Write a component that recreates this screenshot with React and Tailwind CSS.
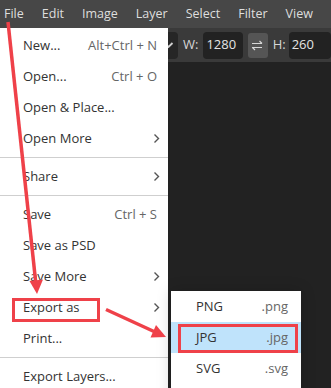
import React from "react";

const menuBar = ["File", "Edit", "Image", "Layer", "Select", "Filter", "View"];

const Chevron = () => (
    <svg width="7" height="11" viewBox="0 0 7 11" className="text-[#555]">
        <polyline points="1.5,1.5 5.5,5.5 1.5,9.5" fill="none" stroke="currentColor" strokeWidth="1.4" />
    </svg>
);

const Item = ({ label, right, sub }) => (
    <div className="h-[31px] flex items-center justify-between pl-[23px] pr-[11px]">
        <span>{label}</span>
        {right && <span className="text-[#666]">{right}</span>}
        {sub && <span className="-mr-[3px]"><Chevron /></span>}
    </div>
);

const Sep = () => (
    <div className="h-[7px] flex items-center">
        <div className="h-px w-full bg-[#cfcfcf]" />
    </div>
);

const App = () => {
    return (
        <div className="relative w-[331px] h-[388px] overflow-hidden flex flex-col bg-[#222] text-[13px]" style={{ fontFamily: '"Open Sans", "Liberation Sans", sans-serif' }}>
            {/* menubar */}
            <div className="h-[28px] bg-[#474747] flex items-center pl-[4px] gap-[18px] text-[12.5px] text-[#dedede]">
                {menuBar.map((m) => <span key={m}>{m}</span>)}
            </div>

            {/* toolbar */}
            <div className="h-[34px] bg-[#3a3a3a] flex items-center text-[#d6d6d6]">
                <div className="ml-[100px] w-[83px] h-[27px] rounded-[4px] bg-[#262626] flex items-center justify-end pr-[4px]">
                    <svg width="11" height="8" viewBox="0 0 11 8">
                        <polyline points="1.5,2 5.5,6 9.5,2" fill="none" stroke="#d0d0d0" strokeWidth="1.8" />
                    </svg>
                </div>
                <span className="ml-[5px]">W:</span>
                <div className="ml-[5px] w-[42px] h-[27px] rounded-[4px] bg-[#222] flex items-center pl-[3px] text-[#e4e4e4]">1280</div>
                <div className="ml-[5px] w-[21px] h-[25px] rounded-[3px] bg-[#555] flex items-center justify-center">
                    <svg width="13" height="11" viewBox="0 0 13 11">
                        <path d="M1 3.5h10M8.5 1l2.5 2.5M1 7.5h10M4 10L1.5 7.5" fill="none" stroke="#d8d8d8" strokeWidth="1.2" />
                    </svg>
                </div>
                <span className="ml-[5px]">H:</span>
                <div className="ml-[3px] w-[45px] h-[27px] rounded-[4px] bg-[#222] flex items-center pl-[3px] text-[#e4e4e4]">260</div>
            </div>

            <div className="flex-1 bg-[#222]" />

            {/* File menu */}
            <div className="absolute left-0 top-[28px] w-[168px] h-[372px] bg-white pt-[2px] text-[#333]">
                <Item label="New..." right="Alt+Ctrl + N" />
                <Item label="Open..." right="Ctrl + O" />
                <Item label="Open & Place..." />
                <Item label="Open More" sub />
                <Sep />
                <Item label="Share" sub />
                <Sep />
                <Item label="Save" right="Ctrl + S" />
                <Item label="Save as PSD" />
                <Item label="Save More" sub />
                <Item label="Export as" sub />
                <Item label="Print..." />
                <Sep />
                <Item label="Export Layers..." />
            </div>

            {/* Export submenu */}
            <div className="absolute left-[171px] top-[291px] w-[130px] h-[110px] bg-white text-[#333] shadow-[0_0_14px_rgba(0,0,0,0.18)]">
                <div className="h-[31px] flex items-center justify-between pl-[25px] pr-[13px]">
                    <span>PNG</span><span className="text-[#666]">.png</span>
                </div>
                <div className="h-[31px] flex items-center justify-between pl-[25px] pr-[13px] bg-[#bfe3fb]">
                    <span>JPG</span><span className="text-[#666]">.jpg</span>
                </div>
                <div className="h-[31px] flex items-center justify-between pl-[25px] pr-[13px]">
                    <span>SVG</span><span className="text-[#666]">.svg</span>
                </div>
            </div>

            {/* annotations */}
            <div className="absolute left-[12px] top-[298px] w-[88px] h-[24px] border-[3px] border-[#ef4149]" />
            <div className="absolute left-[178px] top-[324px] w-[120px] h-[29px] border-[3px] border-[#ef4149]" />
            <svg className="absolute inset-0 pointer-events-none" width="331" height="388">
                <line x1="8" y1="22" x2="35.7" y2="282" stroke="#ef4149" strokeWidth="3.5" />
                <polygon points="37,294 29.5,281 43,279.5" fill="#ef4149" />
                <line x1="106" y1="309.5" x2="154" y2="331.5" stroke="#ef4149" strokeWidth="3.5" />
                <polygon points="166,337 150.5,337.5 156,325" fill="#ef4149" />
            </svg>
        </div>
    );
};

export default App;
